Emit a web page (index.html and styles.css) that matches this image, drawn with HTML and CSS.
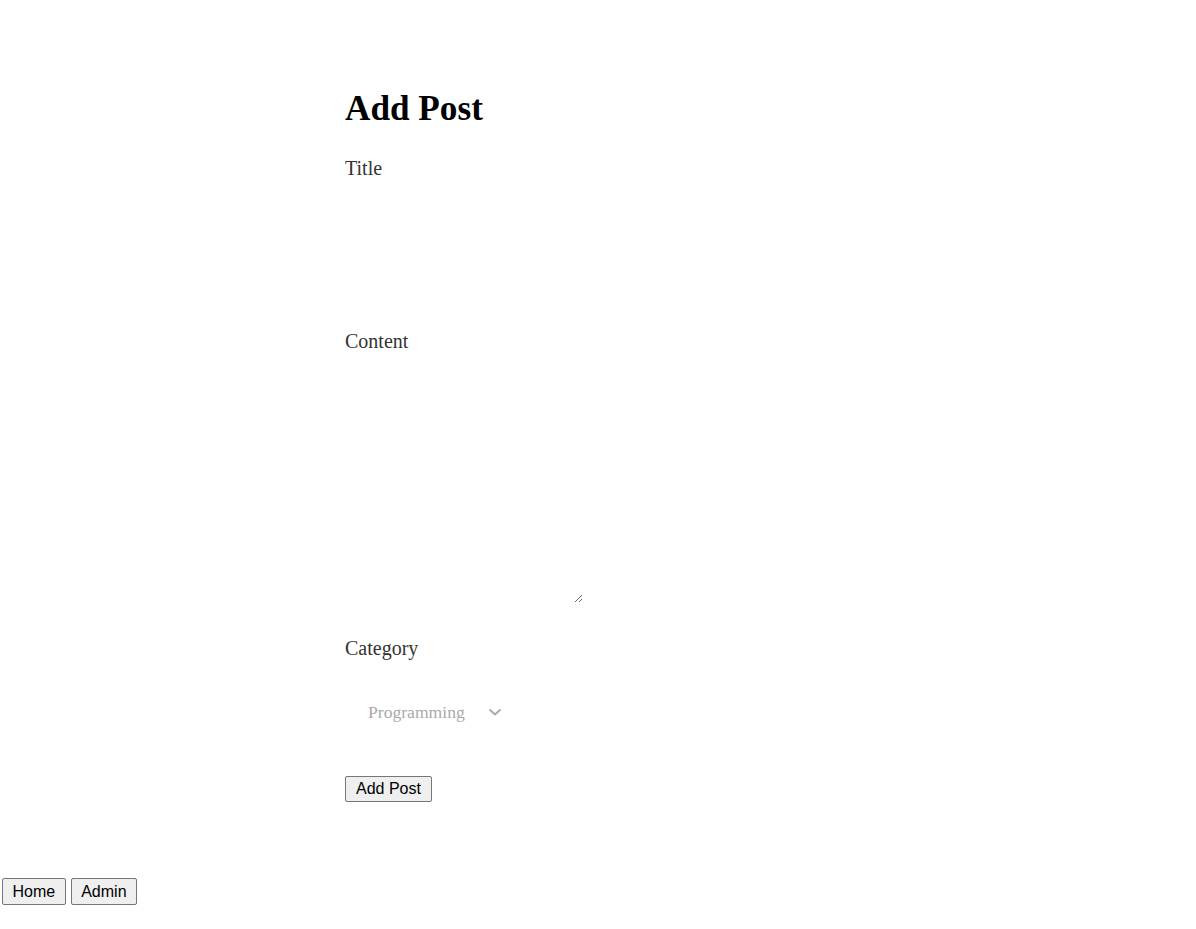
FILE: index.html
```html
<!DOCTYPE html>
<html lang="en">
<head>
<meta charset="utf-8">
<title>Add Post</title>
<link rel="stylesheet" href="styles.css">
</head>
<body>
<main class="container">
  <h1 class="page-title">Add Post</h1>
  <form class="post-form">
    <div class="group group-title">
      <label class="label" for="title">Title</label>
      <input class="input" id="title" type="text">
    </div>
    <div class="group group-content">
      <label class="label" for="content">Content</label>
      <textarea class="textarea" id="content"></textarea>
    </div>
    <div class="group group-category">
      <label class="label" for="category">Category</label>
      <div class="select-wrap">
        <select class="select" id="category">
          <option>Programming</option>
          <option>Design</option>
          <option>Life</option>
        </select>
        <svg class="chevron" width="14" height="8" viewBox="0 0 14 8" aria-hidden="true">
          <path d="M1.5 1.5 L7 6.5 L12.5 1.5" fill="none" stroke="#aaaaaa" stroke-width="2"/>
        </svg>
      </div>
    </div>
    <div class="actions">
      <button class="btn btn-submit" type="button">Add Post</button>
    </div>
  </form>
</main>
<nav class="nav">
  <button class="btn btn-nav" type="button">Home</button>
  <button class="btn btn-nav" type="button">Admin</button>
</nav>
</body>
</html>
```

FILE: styles.css
```css
html, body {
  margin: 0;
  padding: 0;
  background: #ffffff;
}

body {
  font-family: "Liberation Serif", "Times New Roman", serif;
  color: #000;
}

.container {
  width: 506px;
  margin: 0 auto;
  padding: 89px 0 76px;
}

.page-title {
  margin: 0 0 28px;
  font-size: 35.2px;
  font-weight: bold;
  line-height: 40px;
}

.post-form {
  display: flex;
  flex-direction: column;
}

.group {
  display: flex;
  flex-direction: column;
  align-items: flex-start;
  gap: 10px;
}

.label {
  font-size: 20px;
  line-height: 23px;
  color: #333333;
}

.group-title {
  margin-bottom: 20px;
}

.input {
  width: 240px;
  height: 120px;
  border: none;
  outline: none;
  background: transparent;
  padding: 0;
  font-family: inherit;
}

.group-content {
  margin-bottom: 34px;
}

.textarea {
  box-sizing: border-box;
  width: 238px;
  height: 240px;
  border: none;
  outline: none;
  background: transparent;
  padding: 2px;
  font-family: inherit;
}

.group-category {
  margin-bottom: 32px;
}

.select-wrap {
  position: relative;
  display: inline-flex;
  align-items: center;
  margin-top: 10px;
  height: 64px;
}

.select {
  -webkit-appearance: none;
  appearance: none;
  height: 64px;
  padding: 0 44px 0 23px;
  border: none;
  outline: none;
  background: transparent;
  color: #aaaaaa;
  font-family: "Liberation Serif", "Times New Roman", serif;
  font-size: 17.6px;
}

.chevron {
  position: absolute;
  left: 143px;
  top: 28px;
  pointer-events: none;
}

.actions {
  display: flex;
}

.btn {
  font-family: "Liberation Sans", Arial, sans-serif;
  font-size: 16px;
  line-height: 18px;
  color: #000;
  background: #efefef;
  border: 1px solid #767676;
  border-radius: 2px;
  margin: 0;
  cursor: pointer;
}

.btn-submit {
  padding: 3px 10px;
}

.btn-nav {
  padding: 3.5px 9.5px;
}

.nav {
  display: flex;
  gap: 5px;
  padding: 0 2px;
}
```
